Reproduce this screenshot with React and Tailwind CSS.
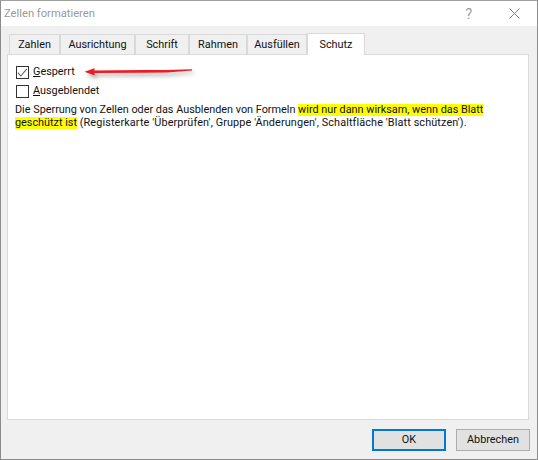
const tabs = [
  { label: 'Zahlen', w: 'w-[51px]' },
  { label: 'Ausrichtung', w: 'w-[75px]' },
  { label: 'Schrift', w: 'w-[54px]' },
  { label: 'Rahmen', w: 'w-[58px]' },
  { label: 'Ausfüllen', w: 'w-[60px]' },
];

function Arrow() {
  return (
    <svg className="absolute left-[75px] top-[7px] drop-shadow-[2px_3px_2px_rgba(0,0,0,0.35)]" width="120" height="24" viewBox="0 0 120 24">
      <path d="M1.5 9.7 L11.5 6.3 L11.5 8.6 L60 8 L84 8 L109 7.2 L109 8.6 L84 10.4 L60 10.8 L11.5 11 L11.5 13.4 Z" fill="#ec1c24" />
    </svg>
  );
}

function Option({ first, label, checked }) {
  return (
    <div className="flex items-center h-[18px] gap-[4px]">
      <div className="w-[13px] h-[13px] border border-[#333333] bg-white">
        {checked && (
          <svg width="11" height="11" viewBox="0 0 11 11" className="block">
            <path d="M0.8 5.6 L3.8 9 L9.8 1.8" fill="none" stroke="#666666" strokeWidth="1.1" />
          </svg>
        )}
      </div>
      <span><span className="underline">{first}</span>{label}</span>
    </div>
  );
}

export default function App() {
  return (
    <div className="w-[538px] h-[460px] bg-[#f0f0f0] border border-[#8c8c8c] border-t-[#a0a0a0] flex flex-col text-[10.85px] leading-[16px] text-[#111111] font-['Roboto','Noto_Sans',sans-serif] overflow-hidden">
      {/* Title bar */}
      <div className="h-[25px] bg-white flex items-center justify-between shrink-0">
        <span className="pl-[3px] text-[11.2px] text-[#9a9a9a]">Zellen formatieren</span>
        <div className="flex items-center gap-[37px] pr-[17px]">
          <span className="text-[14px] text-[#9a9a9a]">?</span>
          <svg width="11" height="11" viewBox="0 0 11 11">
            <path d="M0.5 0.5 L10.5 10.5 M10.5 0.5 L0.5 10.5" stroke="#808080" strokeWidth="1" fill="none" />
          </svg>
        </div>
      </div>

      {/* Tabs */}
      <div className="flex items-end h-[28px] pl-[8px] shrink-0">
        {tabs.map((t) => (
          <div key={t.label} className={`${t.w} h-[20px] bg-[#f0f0f0] border border-b-0 border-[#d9d9d9] flex items-center justify-center`}>
            {t.label}
          </div>
        ))}
        <div className="w-[58px] h-[22px] bg-white border border-b-0 border-[#d9d9d9] flex items-center justify-center relative top-[1px] z-10">
          Schutz
        </div>
      </div>

      {/* Panel */}
      <div className="relative ml-[6px] w-[522px] h-[366px] bg-white border border-[#d9d9d9] pl-[8px] pt-[8px] shrink-0">
        <Option first="G" label="esperrt" checked />
        <Arrow />
        <div className="mt-[1px]"><Option first="A" label="usgeblendet" /></div>
        <div className="mt-[4px] -ml-[1px] whitespace-nowrap leading-[12px]">
          <div className="h-[13px]">
            Die Sperrung von Zellen oder das Ausblenden von Formeln <span className="inline-block h-[12px] bg-[#ffff00]">wird nur dann wirksam, wenn das Blatt</span>
          </div>
          <div className="h-[13px]">
            <span className="inline-block h-[12px] bg-[#ffff00]">geschützt ist</span> <span className="tracking-[0.12px]">(Registerkarte 'Überprüfen', Gruppe 'Änderungen', Schaltfläche 'Blatt schützen').</span>
          </div>
        </div>
      </div>

      {/* Buttons */}
      <div className="flex justify-end gap-[10px] pt-[9px] pr-[7px]">
        <button className="w-[74px] h-[22px] bg-[#e1e1e1] border-2 border-[#0078d7] flex items-center justify-center">OK</button>
        <button className="w-[74px] h-[22px] bg-[#e1e1e1] border border-[#adadad] flex items-center justify-center">Abbrechen</button>
      </div>
    </div>
  );
}
